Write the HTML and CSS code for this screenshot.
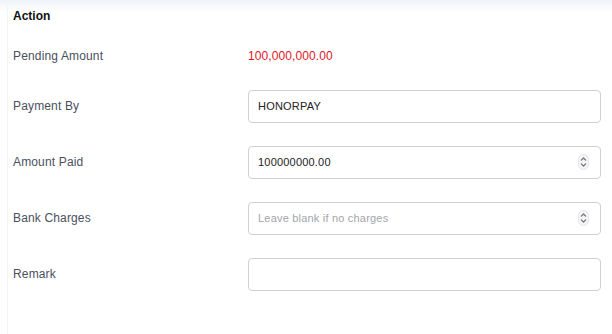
FILE: index.html
```html
<!DOCTYPE html>
<html>
<head>
<meta charset="utf-8">
<link rel="stylesheet" href="styles.css">
</head>
<body>
<div class="topband"></div>
<div class="card">
  <div class="title">Action</div>
  <div class="row row-pending">
    <div class="label">Pending Amount</div>
    <div class="value red">100,000,000.00</div>
  </div>
  <div class="row">
    <div class="label">Payment By</div>
    <div class="field"><span class="text">HONORPAY</span></div>
  </div>
  <div class="row">
    <div class="label">Amount Paid</div>
    <div class="field"><span class="text">100000000.00</span>
      <svg class="spin" width="11" height="16" viewBox="0 0 11 16"><rect x="0.5" y="0.5" width="10" height="15" rx="5" fill="#f6f6f7" stroke="#e2e3e6" stroke-width="1"/><path d="M3.3 6.2 L5.5 4 L7.7 6.2" fill="none" stroke="#6b6f78" stroke-width="1.2" stroke-linecap="round" stroke-linejoin="round"/><path d="M3.3 9.8 L5.5 12 L7.7 9.8" fill="none" stroke="#6b6f78" stroke-width="1.2" stroke-linecap="round" stroke-linejoin="round"/></svg>
    </div>
  </div>
  <div class="row">
    <div class="label">Bank Charges</div>
    <div class="field"><span class="text placeholder">Leave blank if no charges</span>
      <svg class="spin" width="11" height="16" viewBox="0 0 11 16"><rect x="0.5" y="0.5" width="10" height="15" rx="5" fill="#f6f6f7" stroke="#e2e3e6" stroke-width="1"/><path d="M3.3 6.2 L5.5 4 L7.7 6.2" fill="none" stroke="#6b6f78" stroke-width="1.2" stroke-linecap="round" stroke-linejoin="round"/><path d="M3.3 9.8 L5.5 12 L7.7 9.8" fill="none" stroke="#6b6f78" stroke-width="1.2" stroke-linecap="round" stroke-linejoin="round"/></svg>
    </div>
  </div>
  <div class="row">
    <div class="label">Remark</div>
    <div class="field"></div>
  </div>
</div>
</body>
</html>
```
FILE: styles.css
```css
html, body {
  margin: 0;
  padding: 0;
  background: #ffffff;
  font-family: "Liberation Sans", Arial, sans-serif;
}
body {
  width: 612px;
  height: 334px;
  overflow: hidden;
}
.topband {
  height: 12px;
  background: linear-gradient(#eef3f9, #ffffff);
}
.card {
  margin-left: 7px;
  margin-top: -12px;
  height: 334px;
  border-left: 1px solid #f3f4f6;
  padding-left: 5px;
}
.title {
  height: 34px;
  box-sizing: border-box;
  padding-top: 9px;
  font-size: 12px;
  line-height: 14px;
  font-weight: bold;
  color: #111111;
}
.row {
  display: flex;
  align-items: center;
  height: 56px;
}
.row-pending {
  height: 44px;
}
.label {
  width: 235px;
  font-size: 12px;
  letter-spacing: 0.15px;
  color: #4a4f5e;
}
.value {
  font-size: 12px;
  letter-spacing: 0.1px;
}
.red {
  color: #e0151f;
}
.field {
  width: 353px;
  height: 33px;
  box-sizing: border-box;
  border: 1px solid #cfd0d3;
  border-radius: 4px;
  display: flex;
  align-items: center;
  justify-content: space-between;
  padding: 0 11px 0 9px;
}
.text {
  font-size: 11px;
  letter-spacing: 0.2px;
  color: #222222;
}
.placeholder {
  color: #a3a5ab;
}
.spin {
  display: block;
}
```
